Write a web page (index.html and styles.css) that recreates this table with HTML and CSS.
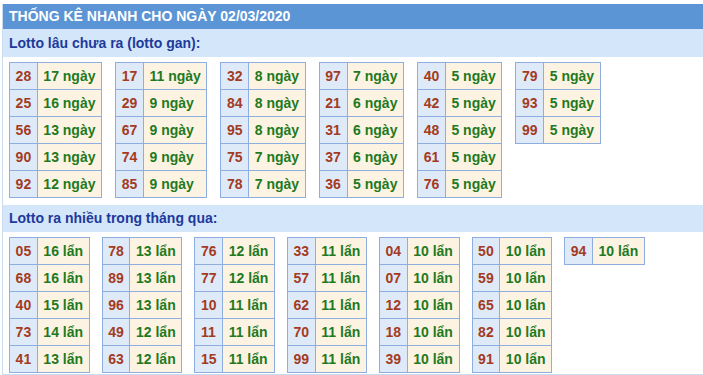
FILE: index.html
```html
<!DOCTYPE html>
<html lang="vi">
<head>
<meta charset="utf-8">
<title>Thống kê nhanh</title>
<link rel="stylesheet" href="styles.css">
</head>
<body>
<div class="box">
  <div class="head">THỐNG KÊ NHANH CHO NGÀY 02/03/2020</div>
  <div class="sub">Lotto lâu chưa ra (lotto gan):</div>
  <div class="grid grid1">
    <table class="lt"><tr><td class="n">28</td><td class="v">17 ngày</td></tr><tr><td class="n">25</td><td class="v">16 ngày</td></tr><tr><td class="n">56</td><td class="v">13 ngày</td></tr><tr><td class="n">90</td><td class="v">13 ngày</td></tr><tr><td class="n">92</td><td class="v">12 ngày</td></tr></table>
    <table class="lt"><tr><td class="n">17</td><td class="v">11 ngày</td></tr><tr><td class="n">29</td><td class="v">9 ngày</td></tr><tr><td class="n">67</td><td class="v">9 ngày</td></tr><tr><td class="n">74</td><td class="v">9 ngày</td></tr><tr><td class="n">85</td><td class="v">9 ngày</td></tr></table>
    <table class="lt"><tr><td class="n">32</td><td class="v">8 ngày</td></tr><tr><td class="n">84</td><td class="v">8 ngày</td></tr><tr><td class="n">95</td><td class="v">8 ngày</td></tr><tr><td class="n">75</td><td class="v">7 ngày</td></tr><tr><td class="n">78</td><td class="v">7 ngày</td></tr></table>
    <table class="lt"><tr><td class="n">97</td><td class="v">7 ngày</td></tr><tr><td class="n">21</td><td class="v">6 ngày</td></tr><tr><td class="n">31</td><td class="v">6 ngày</td></tr><tr><td class="n">37</td><td class="v">6 ngày</td></tr><tr><td class="n">36</td><td class="v">5 ngày</td></tr></table>
    <table class="lt"><tr><td class="n">40</td><td class="v">5 ngày</td></tr><tr><td class="n">42</td><td class="v">5 ngày</td></tr><tr><td class="n">48</td><td class="v">5 ngày</td></tr><tr><td class="n">61</td><td class="v">5 ngày</td></tr><tr><td class="n">76</td><td class="v">5 ngày</td></tr></table>
    <table class="lt"><tr><td class="n">79</td><td class="v">5 ngày</td></tr><tr><td class="n">93</td><td class="v">5 ngày</td></tr><tr><td class="n">99</td><td class="v">5 ngày</td></tr></table>
  </div>
  <div class="sub sub2">Lotto ra nhiều trong tháng qua:</div>
  <div class="grid grid2">
    <table class="lt"><tr><td class="n">05</td><td class="v">16 lẩn</td></tr><tr><td class="n">68</td><td class="v">16 lẩn</td></tr><tr><td class="n">40</td><td class="v">15 lẩn</td></tr><tr><td class="n">73</td><td class="v">14 lẩn</td></tr><tr><td class="n">41</td><td class="v">13 lẩn</td></tr></table>
    <table class="lt"><tr><td class="n">78</td><td class="v">13 lẩn</td></tr><tr><td class="n">89</td><td class="v">13 lẩn</td></tr><tr><td class="n">96</td><td class="v">13 lẩn</td></tr><tr><td class="n">49</td><td class="v">12 lẩn</td></tr><tr><td class="n">63</td><td class="v">12 lẩn</td></tr></table>
    <table class="lt"><tr><td class="n">76</td><td class="v">12 lẩn</td></tr><tr><td class="n">77</td><td class="v">12 lẩn</td></tr><tr><td class="n">10</td><td class="v">11 lẩn</td></tr><tr><td class="n">11</td><td class="v">11 lẩn</td></tr><tr><td class="n">15</td><td class="v">11 lẩn</td></tr></table>
    <table class="lt"><tr><td class="n">33</td><td class="v">11 lẩn</td></tr><tr><td class="n">57</td><td class="v">11 lẩn</td></tr><tr><td class="n">62</td><td class="v">11 lẩn</td></tr><tr><td class="n">70</td><td class="v">11 lẩn</td></tr><tr><td class="n">99</td><td class="v">11 lẩn</td></tr></table>
    <table class="lt"><tr><td class="n">04</td><td class="v">10 lẩn</td></tr><tr><td class="n">07</td><td class="v">10 lẩn</td></tr><tr><td class="n">12</td><td class="v">10 lẩn</td></tr><tr><td class="n">18</td><td class="v">10 lẩn</td></tr><tr><td class="n">39</td><td class="v">10 lẩn</td></tr></table>
    <table class="lt"><tr><td class="n">50</td><td class="v">10 lẩn</td></tr><tr><td class="n">59</td><td class="v">10 lẩn</td></tr><tr><td class="n">65</td><td class="v">10 lẩn</td></tr><tr><td class="n">82</td><td class="v">10 lẩn</td></tr><tr><td class="n">91</td><td class="v">10 lẩn</td></tr></table>
    <table class="lt"><tr><td class="n">94</td><td class="v">10 lẩn</td></tr></table>
  </div>
</div>
</body>
</html>
```
FILE: styles.css
```css
html, body {
  margin: 0;
  padding: 0;
  background: #ffffff;
}
body {
  font-family: "Liberation Sans", Arial, sans-serif;
  padding: 4px 0 0 2px;
}
.box {
  border-left: 1px solid #c9dbef;
  border-bottom: 1px solid #c9dbef;
  width: 720px;
}
.head {
  background: #5b95d5;
  color: #ffffff;
  font-weight: bold;
  font-size: 14px;
  height: 25px;
  line-height: 25px;
  padding-left: 6px;
}
.sub {
  background: #d4e6f9;
  color: #1d3a9c;
  font-weight: bold;
  font-size: 14px;
  height: 28px;
  line-height: 28px;
  padding-left: 6px;
}
.sub2 {
  height: 27px;
  line-height: 27px;
}
.grid {
  display: flex;
  align-items: flex-start;
  gap: 12px;
  padding: 5px 0 0 6px;
}
.grid1 {
  gap: 13px;
  padding-bottom: 7px;
}
.grid2 {
  padding-bottom: 1px;
}
.lt {
  border-collapse: collapse;
  font-size: 14px;
  font-weight: bold;
}
.lt td {
  border: 1px solid #8eaee0;
  padding: 5px 5.6px;
  line-height: 16px;
  white-space: nowrap;
}
.lt .n {
  background: #dfeaf8;
  color: #a33b23;
}
.lt .v {
  background: #fdf3e2;
  color: #1f7a1f;
}
```
